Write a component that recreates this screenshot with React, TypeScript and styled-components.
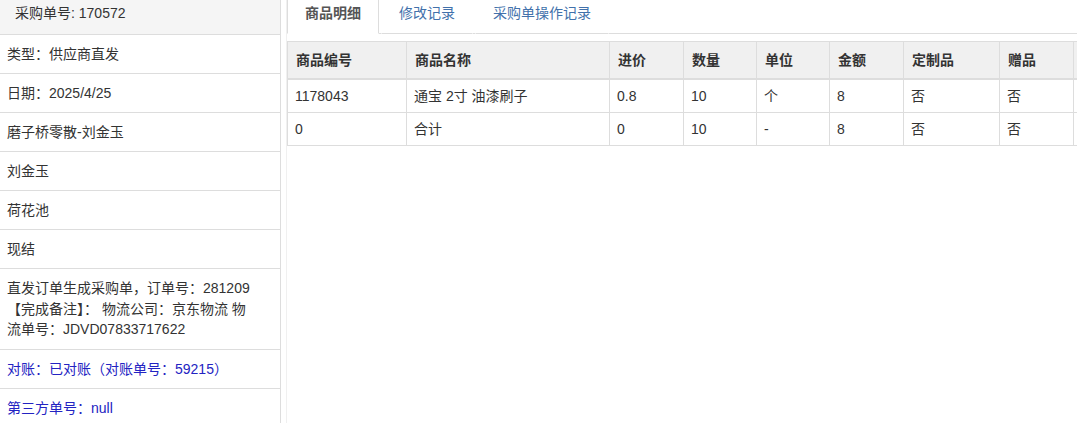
import { Fragment } from 'react'
import styled, { createGlobalStyle } from 'styled-components'

type InfoRow = {
  text: string[]
  tone?: 'link'
}

type GoodsRow = {
  code: string
  name: string
  price: string
  qty: string
  unit: string
  amount: string
  custom: string
  gift: string
}

const infoRows: InfoRow[] = [
  { text: ['类型：供应商直发'] },
  { text: ['日期：2025/4/25'] },
  { text: ['磨子桥零散-刘金玉'] },
  { text: ['刘金玉'] },
  { text: ['荷花池'] },
  { text: ['现结'] },
  {
    text: [
      '直发订单生成采购单，订单号：281209',
      '【完成备注】： 物流公司：京东物流 物',
      '流单号：JDVD07833717622',
    ],
  },
  { text: ['对账：已对账（对账单号：59215）'], tone: 'link' },
  { text: ['第三方单号：null'], tone: 'link' },
]

const columns = [
  { title: '商品编号', width: 119 },
  { title: '商品名称', width: 203 },
  { title: '进价', width: 74 },
  { title: '数量', width: 73 },
  { title: '单位', width: 73 },
  { title: '金额', width: 74 },
  { title: '定制品', width: 96 },
  { title: '赠品', width: 74 },
  { title: '', width: 90 },
]

const goods: GoodsRow[] = [
  { code: '1178043', name: '通宝 2寸 油漆刷子', price: '0.8', qty: '10', unit: '个', amount: '8', custom: '否', gift: '否' },
  { code: '0', name: '合计', price: '0', qty: '10', unit: '-', amount: '8', custom: '否', gift: '否' },
]

const tabs = ['商品明细', '修改记录', '采购单操作记录']

const GlobalStyle = createGlobalStyle`
  *, *::before, *::after {
    box-sizing: border-box;
  }
  html, body {
    margin: 0;
    padding: 0;
    background: #fff;
    overflow: hidden;
  }
  body {
    font-family: "Liberation Sans", "Noto Sans CJK SC", sans-serif;
    font-size: 14px;
    line-height: 20px;
    color: #333;
  }
`

const Page = styled.div`
  display: flex;
  width: 1077px;
  height: 423px;
  overflow: hidden;
`

const Sidebar = styled.aside`
  flex: 0 0 281px;
  border-right: 1px solid #ddd;
  display: flex;
  flex-direction: column;
`

const SideHeader = styled.div`
  background: #f5f5f5;
  padding: 3px 15px 11px;
  border-bottom: 1px solid #ddd;
`

const SideItem = styled.div<{ $tone?: 'link' }>`
  padding: 9px 7px;
  border-bottom: 1px solid #ddd;
  color: ${(p) => (p.$tone === 'link' ? '#2323c2' : '#333')};
`

const SideLine = styled.div<{ $multi?: boolean }>`
  line-height: ${(p) => (p.$multi ? '20.5px' : '20px')};
`

const Main = styled.main`
  flex: 0 0 791px;
  margin-left: 5px;
  border-left: 1px solid #f0f0f0;
`

const TabBar = styled.div`
  display: flex;
  height: 34px;
`

const Tab = styled.div<{ $active?: boolean }>`
  height: 34px;
  padding: 3px 17px 10px;
  border: 1px solid ${(p) => (p.$active ? '#ddd' : 'transparent')};
  border-top: none;
  border-bottom: 1px solid ${(p) => (p.$active ? '#fff' : '#ddd')};
  background: #fff;
  color: ${(p) => (p.$active ? '#555' : '#4171ab')};
  font-weight: ${(p) => (p.$active ? 600 : 400)};
  white-space: nowrap;
`

const TabGap = styled.div`
  flex: 0 0 2px;
  border-bottom: 1px solid #ddd;
`

const TabFill = styled.div`
  flex: 1;
  border-bottom: 1px solid #ddd;
`

const TableWrap = styled.div`
  margin-top: 7px;
  overflow: hidden;
`

const Table = styled.table`
  border-collapse: collapse;
  table-layout: fixed;
  width: 856px;
`

const HeadCell = styled.th`
  text-align: left;
  font-weight: bold;
  background: #f0f0f0;
  border: 1px solid #ddd;
  border-bottom: 2px solid #ddd;
  padding: 8px;
  white-space: nowrap;
`

const Cell = styled.td`
  border: 1px solid #ddd;
  padding: 6px 7px;
  white-space: nowrap;
`

export default function App() {
  return (
    <>
      <GlobalStyle />
      <Page>
        <Sidebar>
          <SideHeader>采购单号: 170572</SideHeader>
          {infoRows.map((row, i) => (
            <SideItem key={i} $tone={row.tone}>
              {row.text.map((line, j) => (
                <SideLine key={j} $multi={row.text.length > 1}>
                  {line}
                </SideLine>
              ))}
            </SideItem>
          ))}
        </Sidebar>
        <Main>
          <TabBar>
            {tabs.map((t, i) => (
              <Fragment key={t}>
                <Tab $active={i === 0}>{t}</Tab>
                <TabGap />
              </Fragment>
            ))}
            <TabFill />
          </TabBar>
          <TableWrap>
            <Table>
              <colgroup>
                {columns.map((c, i) => (
                  <col key={i} style={{ width: c.width }} />
                ))}
              </colgroup>
              <thead>
                <tr>
                  {columns.map((c, i) => (
                    <HeadCell key={i}>{c.title}</HeadCell>
                  ))}
                </tr>
              </thead>
              <tbody>
                {goods.map((g) => (
                  <tr key={g.code}>
                    <Cell>{g.code}</Cell>
                    <Cell>{g.name}</Cell>
                    <Cell>{g.price}</Cell>
                    <Cell>{g.qty}</Cell>
                    <Cell>{g.unit}</Cell>
                    <Cell>{g.amount}</Cell>
                    <Cell>{g.custom}</Cell>
                    <Cell>{g.gift}</Cell>
                    <Cell />
                  </tr>
                ))}
              </tbody>
            </Table>
          </TableWrap>
        </Main>
      </Page>
    </>
  )
}
